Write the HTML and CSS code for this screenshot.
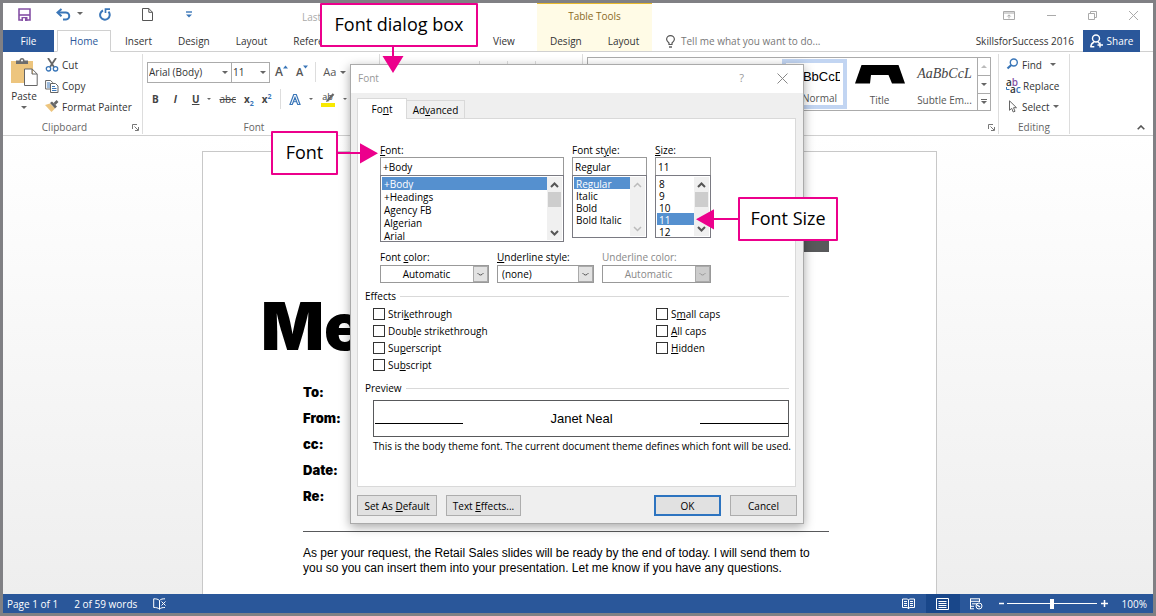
FILE: index.html
```html
<!DOCTYPE html>
<html lang="en">
<head>
<meta charset="utf-8">
<title>Font dialog box</title>
<link rel="stylesheet" href="styles.css">
</head>
<body>
<div class="app">
  <header class="header">
    <div class="header-left">
      <div class="title-row quick-access">
        <button class="icon-btn qa-save" aria-label="Save"><svg width="13" height="13" viewBox="0 0 13 13"><path d="M1 1h11v11H1z" fill="#fff" stroke="#8551a5" stroke-width="1.6"/><path d="M1 7h11" stroke="#8551a5" stroke-width="1.6"/><path d="M3.5 9h6v4h-6z" fill="#8551a5"/><path d="M5 10.2h2V13H5z" fill="#fff"/></svg></button>
        <button class="icon-btn qa-undo" aria-label="Undo"><svg width="27" height="13" viewBox="0 0 27 13"><path d="M2 4.5h7.5a3.4 3.4 0 0 1 .5 7H7" fill="none" stroke="#3a76b8" stroke-width="2"/><path d="M5.5 1L1.5 4.5l4 3.8" fill="none" stroke="#3a76b8" stroke-width="2"/><path d="M21 4h6l-3 3z" fill="#666"/></svg></button>
        <button class="icon-btn qa-redo" aria-label="Redo"><svg width="12" height="13" viewBox="0 0 12 13"><path d="M4 2.5a4.8 4.8 0 1 0 5.5 1.2" fill="none" stroke="#3a76b8" stroke-width="2"/><path d="M6.5 5V1.2h4.5" fill="none" stroke="#3a76b8" stroke-width="1.7"/></svg></button>
        <button class="icon-btn qa-new" aria-label="New"><svg width="11" height="13" viewBox="0 0 11 13"><path d="M.5.5h6.3l3.7 3.8v8.2H.5z M6.8.5v3.8h3.7" fill="#fff" stroke="#555"/></svg></button>
        <button class="icon-btn qa-more" aria-label="Customize"><svg width="6" height="7" viewBox="0 0 6 7"><path d="M0 1h6" stroke="#3a76b8" stroke-width="1.4"/><path d="M0 3.4h6L3 6.6z" fill="#3a76b8"/></svg></button>
        <span class="doc-title">Last</span>
      </div>
      <nav class="tabs-row">
        <button class="tab tab-file">File</button>
        <button class="tab tab-home">Home</button>
        <button class="tab">Insert</button>
        <button class="tab">Design</button>
        <button class="tab">Layout</button>
        <button class="tab">References</button>
        <button class="tab tab-view">View</button>
      </nav>
    </div>
    <div class="context">
      <div class="context-title">Table Tools</div>
      <nav class="tabs-row"><button class="tab">Design</button><button class="tab">Layout</button></nav>
    </div>
    <div class="header-right">
      <div class="title-row window-controls">
        <button class="icon-btn" aria-label="Ribbon display options"><svg width="12" height="9" viewBox="0 0 12 9"><path d="M.5.5h11v8H.5z M.5 2h11 M6 7.5V4 M4.3 5.5L6 3.8l1.7 1.7" fill="none" stroke="#aaa"/></svg></button>
        <button class="icon-btn" aria-label="Minimize"><svg width="9" height="9" viewBox="0 0 9 9"><path d="M0 4.5h9" stroke="#aaa"/></svg></button>
        <button class="icon-btn" aria-label="Restore"><svg width="9" height="9" viewBox="0 0 9 9"><path d="M.5 2.5h6v6h-6z M2.5 2.5v-2h6v6h-2" fill="none" stroke="#aaa"/></svg></button>
        <button class="icon-btn" aria-label="Close"><svg width="9" height="9" viewBox="0 0 9 9"><path d="M0 0l9 9M9 0L0 9" stroke="#aaa"/></svg></button>
      </div>
      <div class="tabs-row help-row">
        <svg width="9" height="13" viewBox="0 0 9 13"><path d="M3 9.5V8C1.5 6.800.6 6 .6 4.300a3.900 3.700 0 0 1 7.800 0C8.400 6 7.500 6.800 6 8v1.500z" fill="none" stroke="#555" stroke-width="1.200"/><path d="M3 12h3" stroke="#555" stroke-width="1.400"/></svg>
        <span class="tell-me">Tell me what you want to do...</span>
        <span class="account">SkillsforSuccess 2016</span>
        <button class="share"><svg width="13" height="14" viewBox="0 0 13 14"><circle cx="6" cy="4.500" r="3.500" fill="none" stroke="#fff" stroke-width="1.400"/><path d="M.7 13c.3-2.800 1.700-4.300 3.300-5M8 8l1.500 1.500M10 8.500v5M7.500 11H13M.3 12.700h4" fill="none" stroke="#fff" stroke-width="1.400"/></svg>Share</button>
      </div>
    </div>
  </header>

  <section class="ribbon">
    <div class="group group-clipboard">
      <div class="clipboard-body">
        <button class="paste"><svg width="27" height="28" viewBox="0 0 27 28"><path d="M0 3h22v22H0z" fill="#edc57e"/><path d="M5 6V2.500h3.500a2.500 2.500 0 0 1 5 0H17V6z" fill="#6d6d6d"/><circle cx="11" cy="2.500" r="1" fill="#fff"/><path d="M13.500 11h7.700l5 5v11.500H13.500z M21 11v5h5" fill="#fff" stroke="#666"/></svg><span>Paste</span><i class="caret"></i></button>
        <div class="clip-actions">
          <button class="cmd"><svg width="14" height="14" viewBox="0 0 14 14"><path d="M3 0l6 9M11 0L5 9" stroke="#666" stroke-width="1.800"/><circle cx="3.500" cy="10.800" r="2.200" fill="none" stroke="#3a76b8" stroke-width="1.300"/><circle cx="10.500" cy="10.800" r="2.200" fill="none" stroke="#3a76b8" stroke-width="1.300"/></svg>Cut</button>
          <button class="cmd"><svg width="14" height="14" viewBox="0 0 14 14"><path d="M.6 1.500h5l2 2V10h-7z" fill="#fff" stroke="#666"/><path d="M2 4h3M2 6h3M2 8h3" stroke="#3a76b8"/><path d="M5.500 4.500h5l2.500 2.500v6.500H5.500z" fill="#fff" stroke="#666"/><path d="M7 7.500h3M7 9.500h4.500M7 11.500h4.500" stroke="#3a76b8"/></svg>Copy</button>
          <button class="cmd"><svg width="14" height="13" viewBox="0 0 14 13"><path d="M0 5l5-1.500 5 5L6.500 12z" fill="#edc57e"/><path d="M5 3l2-1.500 5 5L10 8.500z" fill="#666"/><path d="M9.500 4l3-3" stroke="#666" stroke-width="2.600"/></svg>Format Painter</button>
        </div>
      </div>
      <div class="group-label"><span>Clipboard</span><svg class="launcher" width="7" height="7" viewBox="0 0 7 7"><path d="M.5 5V.5H5M2.500 2.500L6 6M6.500 3v3.500H3" fill="none" stroke="#777"/></svg></div>
    </div>

    <div class="group group-font">
      <div class="font-row">
        <span class="combo"><select aria-label="Font name" class="font-name"><option>Arial (Body)</option></select><i class="caret"></i></span>
        <span class="combo"><select aria-label="Font size" class="font-size"><option>11</option></select><i class="caret"></i></span>
        <button class="icon-btn grow" aria-label="Grow font"><b>A</b><svg width="5" height="4" viewBox="0 0 5 4"><path d="M0 3.500h5L2.500.5z" fill="#3a76b8"/></svg></button>
        <button class="icon-btn shrink" aria-label="Shrink font"><b>A</b><svg width="5" height="4" viewBox="0 0 5 4"><path d="M0 .5h5L2.500 3.500z" fill="#3a76b8"/></svg></button>
        <i class="divider"></i>
        <button class="icon-btn change-case">Aa <i class="caret"></i></button>
      </div>
      <div class="font-row format-row">
        <button class="icon-btn"><b>B</b></button>
        <button class="icon-btn ital"><b>I</b></button>
        <button class="icon-btn under"><b><u>U</u></b></button><i class="caret"></i>
        <button class="icon-btn"><s>abc</s></button>
        <button class="icon-btn"><b>x<sub>2</sub></b></button>
        <button class="icon-btn"><b>x<sup>2</sup></b></button>
        <i class="divider"></i>
        <button class="icon-btn" aria-label="Text effects"><svg width="12" height="13" viewBox="0 0 12 13"><path d="M1 11.500L4.700 1.500h2.600L11 11.500H8.700L6 4.500l-2.700 7z" fill="#fff" stroke="#3a76b8" stroke-width="1.200"/><path d="M4.300 8.700h3.400" stroke="#3a76b8"/></svg></button><i class="caret"></i>
        <button class="icon-btn highlight" aria-label="Highlight"><span>ab</span><svg width="14" height="15" viewBox="0 0 14 15"><path d="M7 8l5.500-6" stroke="#666" stroke-width="2.200"/><path d="M5 10l1-3 2.500 2z" fill="#666"/><path d="M0 11h14v4H0z" fill="#f8e900"/></svg></button><i class="caret"></i>
        <span class="font-color-bar"></span>
      </div>
      <div class="group-label"><span>Font</span></div>
    </div>

    <div class="group group-paragraph">
      <div class="para-tools"><i class="divider"></i><i class="divider"></i><i class="divider"></i></div>
    </div>

    <div class="group group-styles">
      <div class="gallery">
        <button class="style-item style-normal"><span class="sample">AaBbCcDd</span><span class="style-name">Normal</span></button>
        <button class="style-item"><svg width="50" height="19" viewBox="0 0 50 19"><path d="M6.500 0h37L50 18.500H37L33.500 10H16L15 18.500H0z" fill="#000"/></svg><span>Title</span></button>
        <button class="style-item"><span class="sample sample-serif">AaBbCcL</span><span>Subtle Em...</span></button>
        <div class="gallery-scroll">
          <button aria-label="Scroll styles up"><i class="caret caret-up"></i></button>
          <button aria-label="Scroll styles down"><i class="caret"></i></button>
          <button aria-label="More styles" class="more"><i class="caret"></i></button>
        </div>
      </div>
      <div class="group-label"><svg class="launcher" width="7" height="7" viewBox="0 0 7 7"><path d="M.5 5V.5H5M2.500 2.500L6 6M6.500 3v3.500H3" fill="none" stroke="#777"/></svg></div>
    </div>

    <div class="group group-editing">
      <div class="edit-actions">
        <button class="cmd"><svg width="13" height="13" viewBox="0 0 13 13"><circle cx="7.800" cy="4.500" r="3.500" fill="#fff" stroke="#3a76b8" stroke-width="1.400"/><path d="M5.300 7L1.500 10.500" stroke="#3a76b8" stroke-width="2.200"/></svg>Find <i class="caret find-caret"></i></button>
        <button class="cmd"><span class="replace-icon"><b>a<em>b</em></b><b><svg width="4" height="4" viewBox="0 0 4 4"><path d="M.5 0v2.500H3.500" fill="none" stroke="#3a76b8"/></svg>a<q>c</q></b></span>Replace</button>
        <button class="cmd"><svg width="13" height="13" viewBox="0 0 13 13"><path d="M3.500.8v9.500l2.200-2 1.500 3.700 1.800-.7-1.500-3.600h3z" fill="#fff" stroke="#666"/></svg>Select<i class="caret"></i></button>
      </div>
      <div class="group-label"><span>Editing</span></div>
    </div>
    <div class="ribbon-end"><button class="icon-btn" aria-label="Collapse ribbon"><svg width="8" height="5" viewBox="0 0 8 5"><path d="M.7 4.300L4 1l3.300 3.300" fill="none" stroke="#555" stroke-width="1.600"/></svg></button></div>
  </section>

  <main class="workspace">
    <article class="page">
      <div class="page-band"></div>
      <h1>Me</h1>
      <ul class="memo-fields"><li>To:</li><li>From:</li><li>cc:</li><li>Date:</li><li>Re:</li></ul>
      <p class="memo-text">As per your request, the Retail Sales slides will be ready by the end of today. I will send them to you so you can insert them into your presentation. Let me know if you have any questions.</p>
    </article>
  </main>

  <footer class="status">
    <span>Page 1 of 1</span>
    <span>2 of 59 words</span>
    <svg width="14" height="12" viewBox="0 0 14 12"><path d="M6.500 2.500C5 1 3 .8.700.8v8.700c2.300 0 4.300.2 5.800 1.700zM6.500 2.500C8 1 9.500.8 12 .8M6.500 11.200C8 9.700 9.500 9.500 12 9.500M8.500 3.500l4 4M12.500 3.500l-4 4" fill="none" stroke="#fff"/></svg>
    <div class="status-right">
      <button class="view-btn" aria-label="Read mode"><svg width="13" height="12" viewBox="0 0 13 12"><path d="M.5 1h5l1 1 1-1h5v8.500h-5l-1 1.500-1-1.500h-5zM6.500 2v9M2 3.500h3M2 5.500h3M2 7.500h3M8 3.500h3M8 5.500h3M8 7.500h3" fill="none" stroke="#fff"/></svg></button>
      <button class="view-btn active" aria-label="Print layout"><svg width="13" height="12" viewBox="0 0 13 12"><path d="M.5.500h12v11H.5zM2.500 3.500h8M2.500 5.500h8M2.500 7.500h8M2.500 9.500h8" fill="none" stroke="#fff"/></svg></button>
      <button class="view-btn" aria-label="Web layout"><svg width="13" height="12" viewBox="0 0 13 12"><path d="M0 .8h10M0 3.300h10M2 5.800h5M0 8.300h4M0 10.800h4M.5 1v10M9.500 1v3" stroke="#fff" fill="none"/><circle cx="9" cy="8" r="3" fill="#2a579a" stroke="#fff"/><path d="M7 7l3 2" stroke="#fff" stroke-width="1.500"/></svg></button>
      <span class="zoom-sign"><svg width="7" height="7" viewBox="0 0 7 7"><path d="M1 3.500h5" stroke="#fff" stroke-width="1.500"/></svg></span>
      <input class="zoom" type="range" min="0" max="100" value="50" aria-label="Zoom">
      <span class="zoom-sign"><svg width="7" height="7" viewBox="0 0 7 7"><path d="M0 3.500h7M3.500 0v7" stroke="#fff" stroke-width="1.500"/></svg></span>
      <span class="zoom-value">100%</span>
    </div>
  </footer>
</div>

<section class="dialog" role="dialog" aria-labelledby="dlg-title">
  <div class="dialog-title"><span id="dlg-title">Font</span><button class="icon-btn help" aria-label="Help">?</button><button class="icon-btn" aria-label="Close dialog"><svg width="11" height="11" viewBox="0 0 11 11"><path d="M.5.500l10 10M10.500.500l-10 10" stroke="#888"/></svg></button></div>
  <div class="dialog-body">
    <div class="dialog-tabs"><button class="dtab dtab-active">Fo<u>n</u>t</button><button class="dtab">Ad<u>v</u>anced</button></div>
    <div class="panel">
      <div class="font-grid">
        <div class="field">
          <label for="f-font"><u>F</u>ont:</label>
          <input id="f-font" type="text" value="+Body">
          <div class="list list-font"><select size="5" aria-label="Fonts"><option selected>+Body</option><option>+Headings</option><option>Agency FB</option><option>Algerian</option><option>Arial</option></select>
            <span class="bar"><svg width="9" height="6" viewBox="0 0 9 6"><path d="M1 5l3.500-3.500L8 5"/></svg><i></i><svg width="9" height="6" viewBox="0 0 9 6"><path d="M1 1l3.500 3.500L8 1"/></svg></span></div>
        </div>
        <div class="field">
          <label for="f-style">Font st<u>y</u>le:</label>
          <input id="f-style" type="text" value="Regular">
          <div class="list list-small"><select size="4" aria-label="Font styles"><option selected>Regular</option><option>Italic</option><option>Bold</option><option>Bold Italic</option></select>
            <span class="bar bar-off"><svg width="9" height="6" viewBox="0 0 9 6"><path d="M1 5l3.500-3.500L8 5"/></svg><svg width="9" height="6" viewBox="0 0 9 6"><path d="M1 1l3.500 3.500L8 1"/></svg></span></div>
        </div>
        <div class="field">
          <label for="f-size"><u>S</u>ize:</label>
          <input id="f-size" type="text" value="11">
          <div class="list list-small"><select size="5" aria-label="Sizes"><option>8</option><option>9</option><option>10</option><option selected>11</option><option>12</option></select>
            <span class="bar"><svg width="9" height="6" viewBox="0 0 9 6"><path d="M1 5l3.500-3.500L8 5"/></svg><i></i><svg width="9" height="6" viewBox="0 0 9 6"><path d="M1 1l3.500 3.500L8 1"/></svg></span></div>
        </div>
      </div>
      <div class="color-grid">
        <div class="field"><label for="f-color">Font <u>c</u>olor:</label><span class="drop"><select id="f-color" class="centered"><option>Automatic</option></select><i><svg width="7" height="5" viewBox="0 0 7 5"><path d="M.5 1q3 4 6 0"/></svg></i></span></div>
        <div class="field"><label for="f-ustyle"><u>U</u>nderline style:</label><span class="drop"><select id="f-ustyle"><option>(none)</option></select><i><svg width="7" height="5" viewBox="0 0 7 5"><path d="M.5 1q3 4 6 0"/></svg></i></span></div>
        <div class="field field-off"><label for="f-ucolor">Underline color:</label><span class="drop"><select id="f-ucolor" class="centered" disabled><option>Automatic</option></select><i><svg width="7" height="5" viewBox="0 0 7 5"><path d="M.5 1q3 4 6 0"/></svg></i></span></div>
      </div>
      <div class="section-title">Effects</div>
      <div class="effects">
        <div class="checks">
          <label><input type="checkbox"><span>Stri<u>k</u>ethrough</span></label>
          <label><input type="checkbox"><span>Doub<u>l</u>e strikethrough</span></label>
          <label><input type="checkbox"><span>Su<u>p</u>erscript</span></label>
          <label><input type="checkbox"><span>Su<u>b</u>script</span></label>
        </div>
        <div class="checks">
          <label><input type="checkbox"><span>S<u>m</u>all caps</span></label>
          <label><input type="checkbox"><span><u>A</u>ll caps</span></label>
          <label><input type="checkbox"><span><u>H</u>idden</span></label>
        </div>
      </div>
      <div class="section-title section-preview">Preview</div>
      <div class="preview"><i></i><span>Janet Neal</span><i></i></div>
      <div class="preview-note">This is the body theme font. The current document theme defines which font will be used.</div>
    </div>
    <div class="dialog-buttons">
      <button class="btn btn-default">Set As <u>D</u>efault</button>
      <button class="btn btn-effects">Text <u>E</u>ffects...</button>
      <button class="btn btn-ok">OK</button>
      <button class="btn btn-cancel">Cancel</button>
    </div>
  </div>
</section>

<div class="callout callout-dialog">Font dialog box</div>
<svg class="arrow arrow-dialog" width="22" height="26" viewBox="0 0 22 26"><path d="M10 0h2v9h9.500L11 26 .5 9H10z"/></svg>
<div class="callout callout-font">Font</div>
<svg class="arrow arrow-font" width="41" height="21" viewBox="0 0 41 21"><path d="M0 9h23V.300L41 10.300 23 20.500V11H0z"/></svg>
<div class="callout callout-size">Font Size</div>
<svg class="arrow arrow-size" width="43" height="21" viewBox="0 0 43 21"><path d="M43 9H18V.300L0 10.300 18 20.500V11h25z"/></svg>
</body>
</html>
```
FILE: styles.css
```css
* { box-sizing: border-box; }
body { margin: 0; font: 10px/14px "Open Sans", "Noto Sans", sans-serif; color: #333; }
button, input, select { font: inherit; color: inherit; margin: 0; }
button { background: none; border: 0; padding: 0; white-space: nowrap; }
svg { display: block; flex: none; }
.app { height: 100vh; display: flex; flex-direction: column; border: 3px solid #808084; overflow: hidden; background: #fff; }
.icon-btn { display: flex; align-items: center; }
.caret { flex: none; width: 0; height: 0; border: 3px solid transparent; border-top-color: #666; border-bottom-width: 0; }
.caret-up { border-top-width: 0; border-bottom: 3px solid #bbb; }
.divider { width: 1px; height: 20px; background: #ddd; flex: none; }

/* Header */
.header { display: flex; height: 49px; border-bottom: 1px solid #d0d0d0; flex: none; }
.header-left { width: 534px; flex: none; }
.title-row { height: 27px; display: flex; align-items: center; }
.quick-access { padding: 0 0 4px 15px; }
.qa-undo { margin-left: 25px; }
.qa-redo { margin-left: 16px; }
.qa-new { margin-left: 31px; }
.qa-more { margin-left: 33px; }
.doc-title { margin-left: 110px; padding-top: 4px; color: #aaa; }
.tabs-row { display: flex; height: 22px; }
.tab { padding: 0 13px; height: 22px; }
.tab-view { margin-left: 122px; }
.tab-file { background: #2a579a; color: #fff; width: 51px; margin-right: 3px; }
.tab-home { border: 1px solid #d0d0d0; border-bottom-color: #fff; color: #2a579a; padding: 0 11px; margin-right: 1px; background: #fff; width: 54px; }
.context { background: #fffbe6; border-top: 1px solid #e8b92c; flex: none; height: 48px; width: 115px; }
.context-title { text-align: center; color: #8a6a1f; height: 26px; padding-top: 5px; }
.context .tabs-row { justify-content: space-around; }
.header-right { flex: 1; }
.window-controls { justify-content: flex-end; gap: 32px; padding: 0 15px 3px 0; }
.help-row { align-items: center; padding: 0 13px 0 14px; gap: 6px; }
.tell-me { color: #777; }
.account { margin-left: auto; }
.share { background: #2a579a; color: #fff; display: flex; align-items: center; justify-content: center; gap: 4px; width: 57px; height: 22px; margin-left: 3px; }

/* Ribbon */
.ribbon { height: 84px; flex: none; display: flex; border-bottom: 1px solid #d0d0d0; padding: 2px 0 1px; }
.group { border-right: 1px solid #ddd; flex: none; display: flex; flex-direction: column; justify-content: space-between; }
.group-clipboard { width: 140px; }
.group-font { width: 237px; padding-left: 4px; }
.group-paragraph { width: 203px; }
.group-styles { flex: 1; padding: 3px 7px 0 4px; }
.group-editing { width: 71px; }
.group-label { display: flex; justify-content: center; align-items: center; height: 14px; color: #666; position: relative; }
.group-clipboard .group-label { padding-right: 16px; }
.group-font .group-label { padding-right: 18px; }
.launcher { position: absolute; right: 3px; bottom: 3px; }
.group-styles .launcher { right: -4px; }
.clipboard-body { display: flex; }
.paste { display: flex; flex-direction: column; align-items: center; width: 42px; padding-top: 4px; gap: 3px; }
.clip-actions, .edit-actions { display: flex; flex-direction: column; }
.cmd { display: flex; align-items: center; gap: 3px; height: 21px; }
.edit-actions { padding-left: 7px; }
.find-caret { margin-left: 5px; }
.replace-icon { display: flex; flex-direction: column; line-height: 7px; font-size: 10px; width: 14px; }
.replace-icon b { display: flex; align-items: center; font-weight: 600; }
.replace-icon em, .replace-icon q { font-style: normal; color: #8551a5; }
.replace-icon q { color: #3a76b8; quotes: none; }
.font-row { display: flex; align-items: center; height: 22px; margin-top: 7px; }
.format-row { margin-top: 5px; gap: 8px; padding-left: 5px; }
.group-font .group-label { margin-top: auto; }
.combo { display: flex; align-items: center; border: 1px solid #ababab; height: 21px; padding-right: 3px; margin-right: -1px; }
.combo select { appearance: none; border: 0; background: none; padding: 0 1px; height: 19px; }
.font-name { width: 74px; }
.font-size { width: 28px; }
.grow, .shrink { align-items: flex-start; color: #555; }
.grow { margin-left: 6px; font-size: 12px; }
.shrink { margin-left: 8px; font-size: 11px; }
.font-row b { font-weight: 600; }
.grow + .shrink + .divider { margin: 0 7px; }
.change-case { gap: 4px; font-size: 11px; color: #555; }
.format-row b { font-weight: 700; }
.format-row .icon-btn { color: #444; }
.ital { font-style: italic; padding: 0 7px; }
.format-row .caret { border-width: 2px; border-bottom-width: 0; }
.format-row sub, .format-row sup { font-size: 7px; line-height: 0; color: #3a76b8; }
.highlight { display: grid; }
.highlight > * { grid-area: 1 / 1; }
.highlight span { font-size: 9px; line-height: 9px; align-self: start; }
.font-color-bar { width: 14px; height: 4px; background: #e32; margin-top: 10px; flex: none; }
.para-tools { display: flex; padding: 7px 0 0 99px; gap: 27px; }
.gallery { display: flex; justify-content: flex-end; border: 1px solid #ababab; height: 54px; }
.style-item { display: flex; flex-direction: column; align-items: center; justify-content: space-between; width: 65px; padding: 7px 2px 3px; color: #555; overflow: hidden; }
.style-normal { border: 4px solid #c2d5f2; padding: 5px 3px 0 1px; margin-top: 1px; height: 50px; align-items: flex-start; }
.style-normal .sample { width: 53px; overflow: hidden; text-align: left; }
.style-name { padding-left: 15px; }
.sample { font: 13px/18px "Liberation Sans", Arial, sans-serif; color: #000; }
.sample-serif { font: italic 14px/18px "Liberation Serif", serif; color: #444; }
.gallery-scroll { width: 13px; border-left: 1px solid #ababab; display: grid; grid-template-rows: 1fr 1fr 1fr; }
.gallery-scroll button { display: flex; align-items: center; justify-content: center; }
.gallery-scroll button + button { border-top: 1px solid #ababab; }
.gallery-scroll .more { flex-direction: column; gap: 1px; }
.more::before { content: ""; width: 6px; height: 1px; background: #666; }
.ribbon-end { width: 83px; flex: none; display: flex; justify-content: flex-end; align-items: flex-end; padding: 0 8px 4px 0; }

/* Document */
.workspace { flex: 1; min-height: 0; overflow: hidden; background: linear-gradient(#fff, #eee); padding: 15px 17px 0 0; }
.page { width: 735px; height: 100%; margin: 0 auto; background: #fff; border: 1px solid #c8c8c8; border-bottom: 0; padding: 88px 107px 0 100px; color: #000; }
.page-band { height: 12px; width: 60px; margin-left: auto; background: #58595b; }
.page h1 { margin: 41px 0 0 -42px; font: 900 66px/66px Inter, "Liberation Sans", sans-serif; }
.memo-fields { list-style: none; margin: 20px 0 0; padding: 0 0 22px; border-bottom: 1px solid #58595b; font: 900 13px/26px Inter, "Liberation Sans", sans-serif; }
.memo-text { margin: 14px 0 0; font: 12px/15px "Liberation Sans", Arial, sans-serif; }

/* Status bar */
.status { height: 19px; flex: none; background: #2a579a; color: #fff; display: flex; align-items: center; gap: 16px; padding-left: 4px; }
.status-right { margin-left: auto; display: flex; align-items: center; padding-right: 6px; }
.view-btn { width: 34px; height: 19px; display: flex; align-items: center; justify-content: center; }
.active { background: #19478a; }
.zoom-sign { width: 9px; display: flex; justify-content: center; margin-left: 3px; }
.zoom { appearance: none; width: 90px; height: 12px; background: linear-gradient(#fff, #fff) center / 100% 1px no-repeat; margin: 0 0 0 1px; }
.zoom::-webkit-slider-thumb { appearance: none; width: 4px; height: 10px; background: #fff; }
.zoom-value { margin-left: 13px; }

/* Dialog */
.dialog { position: absolute; left: 350px; top: 64px; width: 454px; border: 1px solid #aaa; background: #efefef; color: #000; box-shadow: 0 3px 10px rgba(0, 0, 0, .35); }
.dialog-title { background: #fff; height: 28px; display: flex; align-items: center; color: #999; padding: 0 15px 2px 7px; }
.help { margin-left: auto; margin-right: 33px; font-size: 11px; }
.dialog-body { padding: 5px 7px 7px 6px; }
.dialog-tabs { display: flex; align-items: flex-end; height: 20px; }
.dtab { height: 18px; border: 1px solid #d9d9d9; border-bottom: 0; background: #f0f0f0; width: 59px; }
.dtab-active { height: 21px; width: 50px; background: #fff; margin: 0 -1px -1px 0; z-index: 1; }
.panel { background: #fff; border: 1px solid #d9d9d9; padding: 24px 6px 33px 7px; }
.font-grid { display: grid; grid-template-columns: 184px 75px 56px; column-gap: 8px; margin-left: 15px; align-items: start; }
.color-grid { display: grid; grid-template-columns: 109px 97px 109px; column-gap: 8px; margin: 8px 0 0 15px; }
.field { display: flex; flex-direction: column; }
.field label { height: 15px; white-space: nowrap; }
.font-grid label { height: 14px; }
.field input { width: 100%; height: 19px; border: 1px solid #999; padding: 0 2px; background: #fff; }
.list { border: 1px solid #7a7a82; margin-top: -1px; display: flex; padding: 1px; background: #fff; }
.list select { appearance: none; border: 0; outline: 0; padding: 0; flex: 1; min-width: 0; height: 100%; overflow: hidden; background: #fff; border-radius: 0; scrollbar-width: none; }
.list option { padding: 0 2px; min-height: 0; font: 10px/12px "Open Sans", sans-serif; height: 12px; }
.list option:checked { background: #5590cf linear-gradient(#5590cf, #5590cf); color: #fff; }
.list-font { height: 67px; }
.list-font option { height: 13px; line-height: 13px; }
.list-small { height: 63px; }
.bar { width: 15px; flex: none; background: #f0f0f0; display: flex; flex-direction: column; align-items: center; padding: 5px 0 4px; }
.bar i { width: 13px; height: 15px; background: #cdcdcd; margin-top: 4px; }
.bar svg:last-child { margin-top: auto; }
.bar path { fill: none; stroke: #555; stroke-width: 2; }
.bar-off path { stroke: #bbb; stroke-width: 1.5; }
.drop { display: grid; border: 1px solid #999; height: 18px; }
.drop > * { grid-area: 1 / 1; }
.drop select { appearance: none; border: 0; border-radius: 0; background: #fff; padding: 0 20px 0 4px; height: 16px; width: 100%; color: inherit; opacity: 1; }
.drop .centered { text-align-last: center; padding: 0 16px 0 0; }
.drop i { justify-self: end; width: 15px; background: #e2e2e2; border: 1px solid #aaa; display: flex; align-items: center; justify-content: center; pointer-events: none; }
.drop path { fill: none; stroke: #555; }
.field-off { color: #888; }
.field-off i { background: #ccc; }
.field-off path { stroke: #999; }
.section-title { display: flex; align-items: center; gap: 4px; height: 14px; margin-top: 6px; }
.section-title::after { content: ""; flex: 1; height: 1px; background: #d9d9d9; }
.effects { display: grid; grid-template-columns: 283px 1fr; padding: 2px 0 0 8px; }
.checks label { display: flex; align-items: center; gap: 3px; height: 17px; }
.checks input { appearance: none; width: 12px; height: 12px; border: 1px solid #333; background: #fff; }
.section-preview { margin-top: 8px; }
.preview { height: 37px; border: 1px solid #58595b; margin: 5px 0 0 8px; display: flex; justify-content: space-between; align-items: center; padding-left: 1px; font: 13px/16px "Liberation Sans", Arial, sans-serif; }
.preview i { width: 88px; height: 1px; background: #000; margin-top: 10px; }
.preview-note { margin: 2px 0 0 8px; white-space: nowrap; }
.dialog-buttons { display: flex; gap: 9px; margin: 8px -1px 0 0; }
.btn { height: 21px; border: 1px solid #adadad; background: #e1e1e1; }
.btn-default { width: 80px; }
.btn-effects { width: 75px; }
.btn-ok { width: 67px; border: 2px solid #2d74c0; margin-left: auto; }
.btn-cancel { width: 67px; }

/* Annotations */
.callout { position: absolute; background: #fff; border: 2px solid #ec008c; border-radius: 1px; color: #000; font-size: 18px; line-height: 38px; padding-bottom: 2px; text-align: center; white-space: nowrap; }
.callout-dialog { left: 320px; top: 3px; width: 158px; }
.callout-font { left: 271px; top: 131px; width: 67px; }
.callout-size { left: 738px; top: 197px; width: 100px; }
.arrow { position: absolute; fill: #ec008c; }
.arrow-dialog { left: 382px; top: 47px; }
.arrow-font { left: 337px; top: 143px; }
.arrow-size { left: 696px; top: 209px; }
```
